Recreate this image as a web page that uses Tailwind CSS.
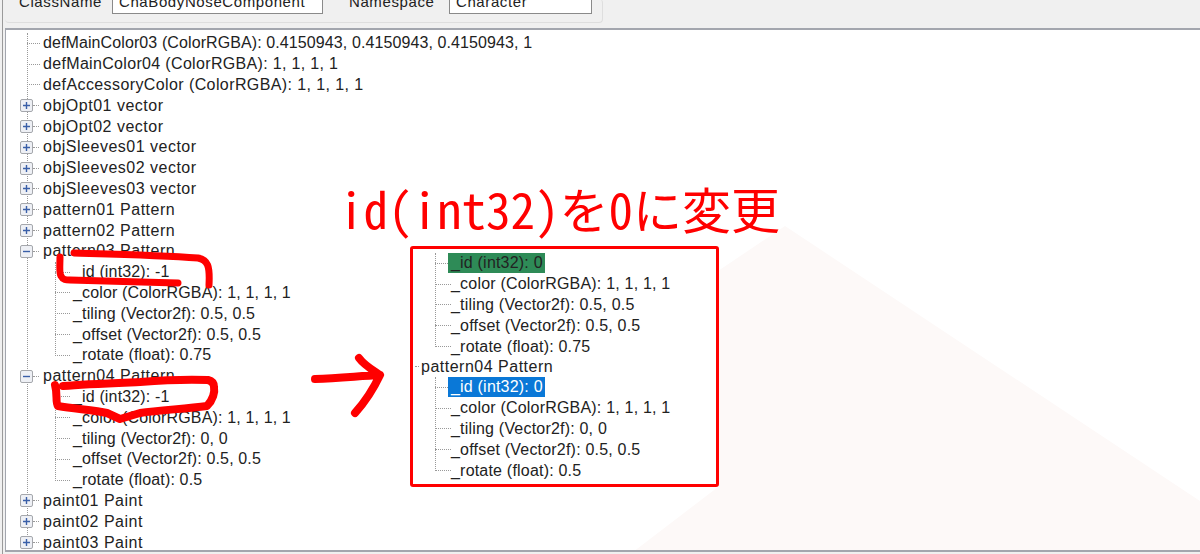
<!DOCTYPE html>
<html lang="en">
<head>
<meta charset="UTF-8">
<title>Tree</title>
<script src="https://cdn.jsdelivr.net/npm/@tailwindcss/browser@4"></script>
</head>
<body class="w-[1200px] h-[554px] overflow-hidden bg-[#f0f0f0] font-['Liberation_Sans',sans-serif] text-[16px] text-[#222]">
<div class="relative flex flex-col h-full ml-[2px] border-l border-[#9a9a9a]">

  <!-- top fields, cut off by the screenshot -->
  <div class="h-[28px] shrink-0 overflow-hidden">
    <div class="flex items-end h-[24px] w-[598px] ml-[2px] -mt-[1px] pl-[14px] border-r border-b border-[#dedede] rounded-sm">
      <div class="flex items-start h-[10px] -translate-y-[20px] text-[15px] tracking-[0.6px] leading-[20px]">
        <span class="w-[93px]">ClassName</span>
        <div class="w-[211px] h-[23px] -mt-[1px] bg-white border border-[#8a8a8a] px-[6px]">ChaBodyNoseComponent</div>
        <span class="w-[100px] ml-[26px]">Namespace</span>
        <div class="w-[143px] h-[23px] -mt-[1px] bg-white border border-[#8a8a8a] px-[6px]">Character</div>
      </div>
    </div>
  </div>

  <!-- tree -->
  <div class="relative flex-1 ml-[2px] mb-[2px] bg-white border-t-2 border-b-2 border-l border-[#a3a6ae] overflow-hidden pt-[3px] whitespace-nowrap">
    <svg class="absolute left-0 top-0" width="1200" height="530"><polygon points="779,196 1194,471 1194,522 627,522 712,457 712,241" fill="#fdf9f8"/></svg>
    <div class="relative pl-[14px]">
      <span class="absolute left-[21px] top-0 bottom-[8px] border-l border-dotted border-[#999]"></span>

      <div class="flex items-center h-[20.8px] tracking-[0.1px]"><i class="ml-[7px] w-[13px] mr-[3px] border-t border-dotted border-[#999]"></i>defMainColor03 (ColorRGBA): 0.4150943, 0.4150943, 0.4150943, 1</div>
      <div class="flex items-center h-[20.8px] tracking-[0.33px]"><i class="ml-[7px] w-[13px] mr-[3px] border-t border-dotted border-[#999]"></i>defMainColor04 (ColorRGBA): 1, 1, 1, 1</div>
      <div class="flex items-center h-[20.8px] tracking-[0.4px]"><i class="ml-[7px] w-[13px] mr-[3px] border-t border-dotted border-[#999]"></i>defAccessoryColor (ColorRGBA): 1, 1, 1, 1</div>

      <div class="relative flex items-center h-[20.8px] tracking-[0.5px]"><svg class="shrink-0" width="13" height="13" viewBox="0 0 13 13"><rect x="0.5" y="0.5" width="12" height="12" rx="1.5" fill="#eef0f5" stroke="#a5a7ac"/><path d="M3 6.5h7M6.5 3v7" stroke="#3a5fa8" stroke-width="1.4"/></svg><i class="w-[6px] mr-[4px] border-t border-dotted border-[#999]"></i>objOpt01 vector</div>
      <div class="relative flex items-center h-[20.8px] tracking-[0.5px]"><svg class="shrink-0" width="13" height="13" viewBox="0 0 13 13"><rect x="0.5" y="0.5" width="12" height="12" rx="1.5" fill="#eef0f5" stroke="#a5a7ac"/><path d="M3 6.5h7M6.5 3v7" stroke="#3a5fa8" stroke-width="1.4"/></svg><i class="w-[6px] mr-[4px] border-t border-dotted border-[#999]"></i>objOpt02 vector</div>
      <div class="relative flex items-center h-[20.8px] tracking-[0.5px]"><svg class="shrink-0" width="13" height="13" viewBox="0 0 13 13"><rect x="0.5" y="0.5" width="12" height="12" rx="1.5" fill="#eef0f5" stroke="#a5a7ac"/><path d="M3 6.5h7M6.5 3v7" stroke="#3a5fa8" stroke-width="1.4"/></svg><i class="w-[6px] mr-[4px] border-t border-dotted border-[#999]"></i>objSleeves01 vector</div>
      <div class="relative flex items-center h-[20.8px] tracking-[0.5px]"><svg class="shrink-0" width="13" height="13" viewBox="0 0 13 13"><rect x="0.5" y="0.5" width="12" height="12" rx="1.5" fill="#eef0f5" stroke="#a5a7ac"/><path d="M3 6.5h7M6.5 3v7" stroke="#3a5fa8" stroke-width="1.4"/></svg><i class="w-[6px] mr-[4px] border-t border-dotted border-[#999]"></i>objSleeves02 vector</div>
      <div class="relative flex items-center h-[20.8px] tracking-[0.5px]"><svg class="shrink-0" width="13" height="13" viewBox="0 0 13 13"><rect x="0.5" y="0.5" width="12" height="12" rx="1.5" fill="#eef0f5" stroke="#a5a7ac"/><path d="M3 6.5h7M6.5 3v7" stroke="#3a5fa8" stroke-width="1.4"/></svg><i class="w-[6px] mr-[4px] border-t border-dotted border-[#999]"></i>objSleeves03 vector</div>
      <div class="relative flex items-center h-[20.8px] tracking-[0.5px]"><svg class="shrink-0" width="13" height="13" viewBox="0 0 13 13"><rect x="0.5" y="0.5" width="12" height="12" rx="1.5" fill="#eef0f5" stroke="#a5a7ac"/><path d="M3 6.5h7M6.5 3v7" stroke="#3a5fa8" stroke-width="1.4"/></svg><i class="w-[6px] mr-[4px] border-t border-dotted border-[#999]"></i>pattern01 Pattern</div>
      <div class="relative flex items-center h-[20.8px] tracking-[0.5px]"><svg class="shrink-0" width="13" height="13" viewBox="0 0 13 13"><rect x="0.5" y="0.5" width="12" height="12" rx="1.5" fill="#eef0f5" stroke="#a5a7ac"/><path d="M3 6.5h7M6.5 3v7" stroke="#3a5fa8" stroke-width="1.4"/></svg><i class="w-[6px] mr-[4px] border-t border-dotted border-[#999]"></i>pattern02 Pattern</div>

      <div class="relative flex items-center h-[20.8px] tracking-[0.5px]"><svg class="shrink-0" width="13" height="13" viewBox="0 0 13 13"><rect x="0.5" y="0.5" width="12" height="12" rx="1.5" fill="#eef0f5" stroke="#a5a7ac"/><path d="M3 6.5h7" stroke="#3a5fa8" stroke-width="1.4"/></svg><i class="w-[6px] mr-[4px] border-t border-dotted border-[#999]"></i>pattern03 Pattern</div>
      <div class="relative">
        <span class="absolute left-[35px] top-0 bottom-[10px] border-l border-dotted border-[#999]"></span>
        <div class="flex items-center h-[20.8px] tracking-[0.15px] pl-[35px]"><i class="w-[15px] mr-[3px] border-t border-dotted border-[#999]"></i>_id (int32): -1</div>
        <div class="flex items-center h-[20.8px] tracking-[0.15px] pl-[35px]"><i class="w-[15px] mr-[3px] border-t border-dotted border-[#999]"></i>_color (ColorRGBA): 1, 1, 1, 1</div>
        <div class="flex items-center h-[20.8px] tracking-[0.15px] pl-[35px]"><i class="w-[15px] mr-[3px] border-t border-dotted border-[#999]"></i>_tiling (Vector2f): 0.5, 0.5</div>
        <div class="flex items-center h-[20.8px] tracking-[0.15px] pl-[35px]"><i class="w-[15px] mr-[3px] border-t border-dotted border-[#999]"></i>_offset (Vector2f): 0.5, 0.5</div>
        <div class="flex items-center h-[20.8px] tracking-[0.15px] pl-[35px]"><i class="w-[15px] mr-[3px] border-t border-dotted border-[#999]"></i>_rotate (float): 0.75</div>
      </div>

      <div class="relative flex items-center h-[20.8px] tracking-[0.5px]"><svg class="shrink-0" width="13" height="13" viewBox="0 0 13 13"><rect x="0.5" y="0.5" width="12" height="12" rx="1.5" fill="#eef0f5" stroke="#a5a7ac"/><path d="M3 6.5h7" stroke="#3a5fa8" stroke-width="1.4"/></svg><i class="w-[6px] mr-[4px] border-t border-dotted border-[#999]"></i>pattern04 Pattern</div>
      <div class="relative">
        <span class="absolute left-[35px] top-0 bottom-[10px] border-l border-dotted border-[#999]"></span>
        <div class="flex items-center h-[20.8px] tracking-[0.15px] pl-[35px]"><i class="w-[15px] mr-[3px] border-t border-dotted border-[#999]"></i>_id (int32): -1</div>
        <div class="flex items-center h-[20.8px] tracking-[0.15px] pl-[35px]"><i class="w-[15px] mr-[3px] border-t border-dotted border-[#999]"></i>_color (ColorRGBA): 1, 1, 1, 1</div>
        <div class="flex items-center h-[20.8px] tracking-[0.15px] pl-[35px]"><i class="w-[15px] mr-[3px] border-t border-dotted border-[#999]"></i>_tiling (Vector2f): 0, 0</div>
        <div class="flex items-center h-[20.8px] tracking-[0.15px] pl-[35px]"><i class="w-[15px] mr-[3px] border-t border-dotted border-[#999]"></i>_offset (Vector2f): 0.5, 0.5</div>
        <div class="flex items-center h-[20.8px] tracking-[0.15px] pl-[35px]"><i class="w-[15px] mr-[3px] border-t border-dotted border-[#999]"></i>_rotate (float): 0.5</div>
      </div>

      <div class="relative flex items-center h-[20.8px] tracking-[0.5px]"><svg class="shrink-0" width="13" height="13" viewBox="0 0 13 13"><rect x="0.5" y="0.5" width="12" height="12" rx="1.5" fill="#eef0f5" stroke="#a5a7ac"/><path d="M3 6.5h7M6.5 3v7" stroke="#3a5fa8" stroke-width="1.4"/></svg><i class="w-[6px] mr-[4px] border-t border-dotted border-[#999]"></i>paint01 Paint</div>
      <div class="relative flex items-center h-[20.8px] tracking-[0.5px]"><svg class="shrink-0" width="13" height="13" viewBox="0 0 13 13"><rect x="0.5" y="0.5" width="12" height="12" rx="1.5" fill="#eef0f5" stroke="#a5a7ac"/><path d="M3 6.5h7M6.5 3v7" stroke="#3a5fa8" stroke-width="1.4"/></svg><i class="w-[6px] mr-[4px] border-t border-dotted border-[#999]"></i>paint02 Paint</div>
      <div class="relative flex items-center h-[20.8px] tracking-[0.5px]"><svg class="shrink-0" width="13" height="13" viewBox="0 0 13 13"><rect x="0.5" y="0.5" width="12" height="12" rx="1.5" fill="#eef0f5" stroke="#a5a7ac"/><path d="M3 6.5h7M6.5 3v7" stroke="#3a5fa8" stroke-width="1.4"/></svg><i class="w-[6px] mr-[4px] border-t border-dotted border-[#999]"></i>paint03 Paint</div>
    </div>
  </div>

  <!-- annotation: red strokes drawn over the tree -->
  <svg class="absolute -left-[3px] top-0 pointer-events-none" width="1200" height="554" fill="none" stroke="#ff0000" stroke-linecap="round" stroke-linejoin="round">
    <path d="M74 253C110 254 160 255 198 258C208 260 210 266 209 285" stroke-width="7"/>
    <path d="M60 257C60 265 59 273 61 276C63 280 66 280 70 280C100 281 140 282 178 283" stroke-width="7"/>
    <path d="M55 385C58 395 55 402 58 406C75 409 95 410 107 413L120 419L140 413C160 410 185 409 207 406C213 400 215 392 214 387C214 383 212 381 208 380C185 379 165 380 140 382C115 383 85 384 63 386" stroke-width="8"/>
    <path d="M315 379C340 378 360 376 380 375C372 392 364 403 355 413M359 358C364 365 371 369 380 375" stroke-width="8"/>
  </svg>

  <!-- annotation title -->
  <div class="absolute left-[336px] top-[173px] text-[49px] leading-[70px] text-[#ff0000] font-['Noto_Sans_CJK_JP',sans-serif] [font-feature-settings:'hwid'] whitespace-nowrap">id(int32)を0に変更</div>

  <!-- annotation: pasted tree with the new values -->
  <div class="absolute left-[407px] top-[246px] w-[309px] h-[241px] bg-white border-[3px] border-[#ff0000] rounded-[3px] whitespace-nowrap pt-[4px] pl-[8px] tracking-[0.2px]">
    <div class="relative">
      <span class="absolute left-[14px] top-0 bottom-[10px] border-l border-dotted border-[#999]"></span>
      <div class="flex items-center h-[20.8px] pl-[14px]"><i class="w-[13px] border-t border-dotted border-[#999]"></i><span class="bg-[#2e8b57] pl-[3px] pr-[2px] h-[20px] leading-[20px]">_id (int32): 0</span></div>
      <div class="flex items-center h-[20.8px] pl-[14px]"><i class="w-[16px] border-t border-dotted border-[#999]"></i>_color (ColorRGBA): 1, 1, 1, 1</div>
      <div class="flex items-center h-[20.8px] pl-[14px]"><i class="w-[16px] border-t border-dotted border-[#999]"></i>_tiling (Vector2f): 0.5, 0.5</div>
      <div class="flex items-center h-[20.8px] pl-[14px]"><i class="w-[16px] border-t border-dotted border-[#999]"></i>_offset (Vector2f): 0.5, 0.5</div>
      <div class="flex items-center h-[20.8px] pl-[14px]"><i class="w-[16px] border-t border-dotted border-[#999]"></i>_rotate (float): 0.75</div>
    </div>
    <div class="flex items-center h-[20px] tracking-[0.5px]"><i class="w-[4px] -ml-[6px] mr-[2px] border-t border-dotted border-[#999]"></i>pattern04 Pattern</div>
    <div class="relative">
      <span class="absolute left-[14px] top-0 bottom-[10px] border-l border-dotted border-[#999]"></span>
      <div class="flex items-center h-[20.8px] pl-[14px]"><i class="w-[13px] border-t border-dotted border-[#999]"></i><span class="bg-[#0a78d7] text-white pl-[3px] pr-[2px] h-[20px] leading-[20px]">_id (int32): 0</span></div>
      <div class="flex items-center h-[20.8px] pl-[14px]"><i class="w-[16px] border-t border-dotted border-[#999]"></i>_color (ColorRGBA): 1, 1, 1, 1</div>
      <div class="flex items-center h-[20.8px] pl-[14px]"><i class="w-[16px] border-t border-dotted border-[#999]"></i>_tiling (Vector2f): 0, 0</div>
      <div class="flex items-center h-[20.8px] pl-[14px]"><i class="w-[16px] border-t border-dotted border-[#999]"></i>_offset (Vector2f): 0.5, 0.5</div>
      <div class="flex items-center h-[20.8px] pl-[14px]"><i class="w-[16px] border-t border-dotted border-[#999]"></i>_rotate (float): 0.5</div>
    </div>
  </div>
</div>
</body>
</html>
